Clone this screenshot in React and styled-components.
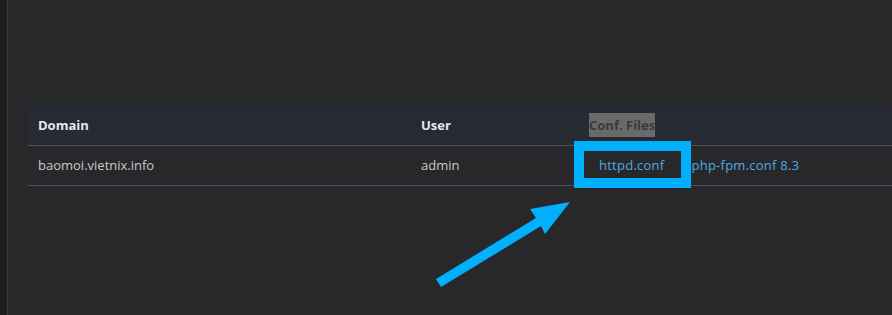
import React from 'react';
import styled, { createGlobalStyle } from 'styled-components';

const GlobalStyle = createGlobalStyle`
  html, body {
    margin: 0;
    padding: 0;
    background: #28282a;
    font-family: 'Open Sans', 'Liberation Sans', sans-serif;
  }
`;

const Page = styled.div`
  position: relative;
  display: flex;
  width: 892px;
  height: 315px;
  overflow: hidden;
  background: #28282a;
`;

const Rail = styled.aside`
  width: 7px;
  flex-shrink: 0;
  background: #1e1e20;
  border-right: 1px solid #3b3b3e;
`;

const Main = styled.main`
  flex: 1;
  padding: 105px 0 0 20px;
`;

const Table = styled.table`
  width: 100%;
  border-collapse: collapse;
  table-layout: fixed;
  font-size: 13px;
`;

const HeadRow = styled.tr`
  background: #262a33;
  border-bottom: 1px solid #4a525e;
`;

const Th = styled.th`
  box-sizing: border-box;
  width: ${(p) => p.$w || 'auto'};
  height: 40px;
  padding: 0 10px;
  text-align: left;
  font-weight: 700;
  color: #e9e9ea;
`;

const Marked = styled.span`
  background: #6a6a6a;
  color: #3a3a3a;
  padding: 3px 0;
`;

const Row = styled.tr`
  border-bottom: 1px solid #4a525e;
`;

const Td = styled.td`
  height: 39px;
  padding: 0 10px;
  color: #c9c9cb;
  font-weight: 500;
`;

const Links = styled.div`
  display: flex;
  align-items: center;
  gap: 27px;
`;

const FileLink = styled.a`
  position: relative;
  color: #4ea8e6;
  text-decoration: none;
  letter-spacing: 0.25px;
  margin-left: ${(p) => (p.$first ? '10px' : '0')};

  ${(p) =>
    p.$marked &&
    `
    &::after {
      content: '';
      position: absolute;
      left: -25px;
      right: -27px;
      top: -15px;
      bottom: -14px;
      border: 10px solid #00b0ff;
    }
  `}
`;

const Overlay = styled.svg`
  position: absolute;
  inset: 0;
  pointer-events: none;
`;

const App = () => {
  return (
    <Page>
      <GlobalStyle />
      <Rail />
      <Main>
        <Table>
          <thead>
            <HeadRow>
              <Th $w="383px">Domain</Th>
              <Th $w="168px">User</Th>
              <Th>
                <Marked>Conf. Files</Marked>
              </Th>
            </HeadRow>
          </thead>
          <tbody>
            <Row>
              <Td>baomoi.vietnix.info</Td>
              <Td>admin</Td>
              <Td>
                <Links>
                  <FileLink href="#" $first $marked>
                    httpd.conf
                  </FileLink>
                  <FileLink href="#">php-fpm.conf 8.3</FileLink>
                </Links>
              </Td>
            </Row>
          </tbody>
        </Table>
      </Main>
      <Overlay width="892" height="315" viewBox="0 0 892 315">
        <polygon
          points="436,279 536,218 530,209 570,202 545,234 541,226 441,287"
          fill="#00b0ff"
        />
      </Overlay>
    </Page>
  );
};

export default App;
